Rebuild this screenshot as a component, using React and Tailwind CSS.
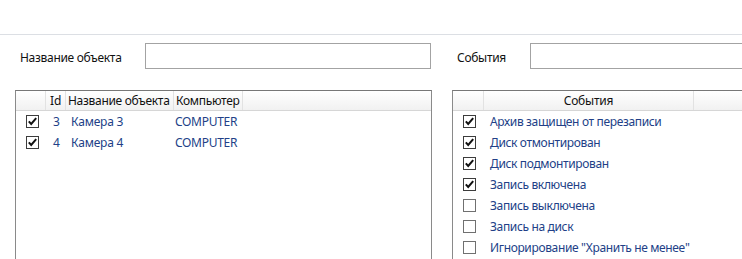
import React from "react";

const Box = ({ checked }) => (
  <svg width="13" height="13" viewBox="0 0 13 13" className="block">
    <rect x="0.5" y="0.5" width="12" height="12" fill="#fff" stroke={checked ? "#3c3c3c" : "#707070"} />
    {checked && (
      <path d="M2.8 6.4 L5.2 9 L10.2 3.2" fill="none" stroke="#111" strokeWidth="2" />
    )}
  </svg>
);

const leftRows = [
  { id: "3", name: "Камера 3", pc: "COMPUTER" },
  { id: "4", name: "Камера 4", pc: "COMPUTER" },
];

const events = [
  ["Архив защищен от перезаписи", true],
  ["Диск отмонтирован", true],
  ["Диск подмонтирован", true],
  ["Запись включена", true],
  ["Запись выключена", false],
  ["Запись на диск", false],
  ["Игнорирование \"Хранить не менее\"", false],
];

export default function App() {
  return (
    <div
      className="w-[742px] h-[259px] overflow-hidden bg-white text-[12px] text-[#111]"
      style={{ fontFamily: '"Noto Sans", "Open Sans", sans-serif' }}
    >
      <div className="h-[35px] border-b border-[#dcdfe4]" />
      <div className="flex pl-[15px] pt-[8px] w-[1200px]">
        <div className="w-[416px] shrink-0 flex items-center">
          <span className="pl-[5px] pt-[4px] w-[130px] tracking-[-0.3px]">Название объекта</span>
          <div className="w-[286px] h-[26px] border border-[#a3a3a3] bg-white" />
        </div>
        <div className="ml-[21px] w-[416px] shrink-0 flex items-center">
          <span className="pl-[5px] pt-[4px] w-[78px] tracking-[-0.3px]">События</span>
          <div className="w-[300px] h-[26px] border border-[#a3a3a3] bg-white" />
        </div>
      </div>
      <div className="flex pl-[15px] pt-[21px] w-[1200px]">
        {/* left grid */}
        <div className="w-[417px] h-[200px] shrink-0 border border-[#8a8a8a] border-t-[#777]">
          <div className="flex h-[20px] bg-gradient-to-b from-white to-[#f1f1f1] border-b border-[#d6d6d6]">
            <div className="w-[30px] border-r border-[#e2e2e2]" />
            <div className="w-[20px] border-r border-[#e2e2e2] pl-[4px] leading-[19px]">Id</div>
            <div className="w-[108px] border-r border-[#e2e2e2] pl-[2px] leading-[19px] tracking-[-0.3px] whitespace-nowrap overflow-hidden">Название объекта</div>
            <div className="w-[69px] border-r border-[#e2e2e2] pl-[2px] leading-[19px] tracking-[-0.3px] whitespace-nowrap overflow-hidden">Компьютер</div>
          </div>
          {leftRows.map((r) => (
            <div key={r.id} className="flex h-[21px] items-center text-[#223f87]">
              <div className="w-[30px] pl-[10px]"><Box checked /></div>
              <div className="w-[21px] pl-[7px]">{r.id}</div>
              <div className="w-[106px] pl-[4px] tracking-[-0.2px]">{r.name}</div>
              <div className="pl-[2px] tracking-[-0.3px]">{r.pc}</div>
            </div>
          ))}
        </div>
        {/* right grid */}
        <div className="ml-[20px] w-[417px] h-[200px] shrink-0 border border-[#8a8a8a] border-t-[#777]">
          <div className="flex h-[20px] bg-gradient-to-b from-white to-[#f1f1f1] border-b border-[#d6d6d6]">
            <div className="w-[31px] border-r border-[#e2e2e2]" />
            <div className="w-[210px] border-r border-[#e2e2e2] text-center leading-[19px] tracking-[-0.2px]">События</div>
          </div>
          {events.map(([t, c]) => (
            <div key={t} className="flex h-[21px] items-center text-[#223f87]">
              <div className="w-[37px] pl-[10px]"><Box checked={c} /></div>
              <div className="tracking-[-0.35px] whitespace-nowrap">{t}</div>
            </div>
          ))}
        </div>
      </div>
    </div>
  );
}
